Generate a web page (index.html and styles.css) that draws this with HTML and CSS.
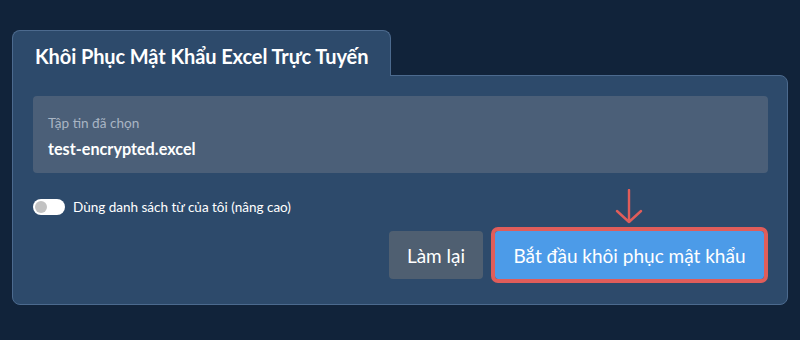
FILE: index.html
```html
<!DOCTYPE html>
<html lang="vi">
<head>
<meta charset="utf-8">
<title>Khôi Phục Mật Khẩu Excel Trực Tuyến</title>
<link rel="stylesheet" href="styles.css">
</head>
<body>
<div class="wrap">
  <div class="tab"><h1 class="title">Khôi Phục Mật Khẩu Excel Trực Tuyến</h1></div>
  <div class="panel">
    <div class="field">
      <div class="field-label">Tập tin đã chọn</div>
      <div class="field-value">test-encrypted.excel</div>
    </div>
    <label class="toggle-row">
      <span class="toggle"><span class="knob"></span></span>
      <span class="toggle-text">Dùng danh sách từ của tôi (nâng cao)</span>
    </label>
    <div class="actions">
      <button class="btn btn-reset">Làm lại</button>
      <div class="primary-wrap">
        <svg class="arrow" width="30" height="36" viewBox="0 0 30 36" aria-hidden="true">
          <path d="M15 1 V33 M3 22 L15 33 L27 22" fill="none" stroke="#e05d5a" stroke-width="2.4" stroke-linecap="round" stroke-linejoin="round"/>
        </svg>
        <button class="btn btn-primary">Bắt đầu khôi phục mật khẩu</button>
      </div>
    </div>
  </div>
</div>
</body>
</html>
```

FILE: styles.css
```css
html, body {
  margin: 0;
  padding: 0;
}
body {
  background: #11233a;
  font-family: Lato, "Noto Sans", sans-serif;
  color: #ffffff;
  width: 800px;
  height: 340px;
  overflow: hidden;
}
.wrap {
  padding: 30px 12px 0 12px;
}
.tab {
  display: inline-block;
  position: relative;
  z-index: 1;
  background: #2d4a6b;
  border: 1px solid #4c6a8e;
  border-bottom: none;
  border-radius: 8px 8px 0 0;
  height: 46px;
  margin-bottom: -1px;
  padding: 0 22px 0 22px;
  box-sizing: border-box;
  width: 379px;
}
.title {
  margin: 0;
  font-size: 20px;
  font-weight: 700;
  line-height: 20px;
  padding-top: 15px;
  letter-spacing: -0.1px;
  white-space: nowrap;
}
.panel {
  background: #2d4a6b;
  border: 1px solid #4c6a8e;
  border-radius: 0 8px 8px 8px;
  padding: 20px 19px 25px 20px;
}
.field {
  background: #4b5f78;
  border-radius: 4px;
  height: 77px;
  box-sizing: border-box;
  padding: 19px 15px 0 15px;
}
.field-label {
  font-size: 13.6px;
  line-height: 16px;
  color: #a9b5c4;
}
.field-value {
  margin-top: 9px;
  font-size: 16.2px;
  font-weight: 700;
  line-height: 18px;
  color: #ffffff;
}
.toggle-row {
  display: flex;
  align-items: center;
  gap: 8px;
  margin-top: 26px;
  height: 16px;
}
.toggle {
  display: flex;
  align-items: center;
  width: 32px;
  height: 16px;
  border-radius: 8px;
  background: #ffffff;
  padding: 0 2px;
  box-sizing: border-box;
}
.knob {
  width: 12px;
  height: 12px;
  border-radius: 50%;
  background: #c2c2c2;
}
.toggle-text {
  font-size: 13.5px;
  line-height: 16px;
  color: #ffffff;
}
.actions {
  display: flex;
  justify-content: flex-end;
  align-items: center;
  gap: 12px;
  margin-top: 16px;
  padding-right: 4px;
}
.btn {
  font-family: Lato, "Noto Sans", sans-serif;
  font-size: 19px;
  color: #ffffff;
  border: none;
  border-radius: 4px;
  height: 48px;
  margin: 0;
  cursor: pointer;
}
.btn-reset {
  background: #4f5f71;
  width: 94px;
  padding: 0;
}
.primary-wrap {
  position: relative;
}
.btn-primary {
  display: block;
  background: #4c9be8;
  width: 269px;
  padding: 0;
  outline: 4px solid #e05d5a;
  border-radius: 3px;
}
.arrow {
  position: absolute;
  left: 119px;
  top: -42px;
}
```
